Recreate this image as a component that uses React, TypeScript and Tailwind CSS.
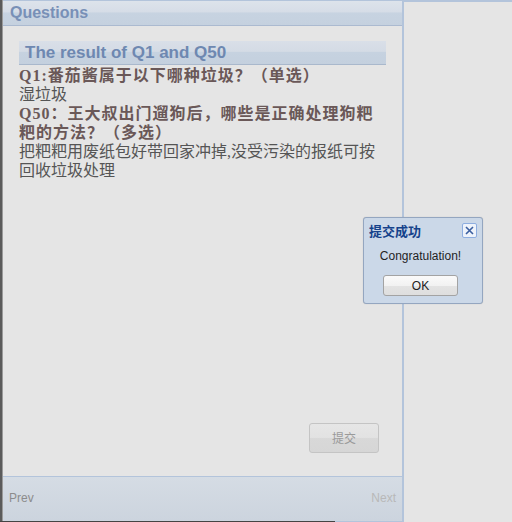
import React from "react";

const cjk = "font-['Liberation_Serif','Noto_Sans_CJK_SC',serif]";

const App = () => {
  return (
    <div className="relative flex h-[522px] w-[512px] overflow-hidden bg-[#e5e5e5] font-['Liberation_Sans',sans-serif]">
      {/* left edge of the window behind */}
      <div className="flex w-[3px] shrink-0 flex-col">
        <div className="h-full w-full border-r border-[#9a9a9a] bg-[#5b5b5b]" />
      </div>

      {/* questions panel */}
      <div className="flex w-[401px] shrink-0 flex-col border-t border-r-2 border-[#b3c4db]">
        <div className="flex h-[25px] shrink-0 items-center border-b border-[#abbad0] bg-[linear-gradient(#dde3eb_0%,#d6dde7_45%,#c7d3e1_50%,#c5d1df_100%)] pl-[7px] text-[16px] font-bold text-[#7890b7]">
          Questions
        </div>

        <div className="flex flex-1 flex-col px-[16px] pt-[15px]">
          <div className="flex h-[24px] items-center border-b border-[#a9b8cc] bg-[linear-gradient(#d9dfe8_0%,#d4dbe5_45%,#c6d2e0_50%,#c4d0de_100%)] pl-[6px] text-[17px] font-bold text-[#6e88b1]">
            The result of Q1 and Q50
          </div>

          <div className={`w-[368px] pt-px text-[16px] leading-[19px] ${cjk}`}>
            <p className="font-bold tracking-[1px] text-[#6a5858]">Q1:番茄酱属于以下哪种垃圾？（单选）</p>
            <p className="text-[#555555]">湿垃圾</p>
            <p className="font-bold tracking-[1px] text-[#6a5858]">Q50：王大叔出门遛狗后，哪些是正确处理狗粑粑的方法？（多选）</p>
            <p className="text-[#555555]">把粑粑用废纸包好带回家冲掉,没受污染的报纸可按回收垃圾处理</p>
          </div>

          <div className="mt-auto mb-[23px] flex justify-end pr-[7px]">
            <button className="flex h-[30px] w-[70px] items-center justify-center rounded-[3px] border border-[#c4c4c4] bg-[linear-gradient(#e6e6e6_0%,#e2e2e2_48%,#d8d8d8_52%,#d6d6d6_100%)] text-[12px] text-[#9a9a9a] font-['Noto_Sans_CJK_SC',sans-serif]">
              提交
            </button>
          </div>
        </div>

        <div className="flex h-[46px] shrink-0 items-center justify-between border-t border-b border-[#b3c4db] bg-[linear-gradient(#d5dce4,#ccd4de)] px-[6px] pb-[3px] text-[12px]">
          <span className="text-[#8c8c8c]">Prev</span>
          <span className="text-[#b8b8b8]">Next</span>
        </div>
      </div>

      {/* right area */}
      <div className="flex-1 border-t-2 border-[#b3c4db]" />

      {/* bottom edge of the window behind */}
      <div className="absolute bottom-0 left-0 h-px w-[335px] bg-[#444444]" />

      {/* message box */}
      <div className="absolute left-[363px] top-[217px] flex h-[87px] w-[120px] flex-col rounded-[3px] border border-[#94a6c0] bg-[#cbd8e8] px-[5px] pt-[4px] shadow-[0_0_1px_rgba(0,0,0,0.2)]">
        <div className="flex h-[16px] items-center justify-between">
          <span className="text-[13px] font-bold leading-none text-[#15428b] font-['Noto_Sans_CJK_SC',sans-serif]">提交成功</span>
          <span className="flex h-[15px] w-[15px] items-center justify-center rounded-[2px] border border-[#8eaee0] bg-[#eef3fb]">
            <svg width="9" height="9" viewBox="0 0 9 9">
              <path d="M1 1 L8 8 M8 1 L1 8" stroke="#3b5fa0" strokeWidth="1.6" />
            </svg>
          </span>
        </div>
        <div className="mt-[11px] pr-[5px] text-center text-[12px] leading-[14px] text-[#1f1f1f]">Congratulation!</div>
        <div className="mt-[12px] flex justify-center pr-[5px]">
          <button className="flex h-[21px] w-[75px] items-center justify-center rounded-[3px] border border-[#a3a3a3] bg-[linear-gradient(#fafafa_0%,#f2f2f2_50%,#e3e3e3_55%,#dedede_100%)] text-[12px] text-[#222222]">
            OK
          </button>
        </div>
      </div>
    </div>
  );
};

export default App;
